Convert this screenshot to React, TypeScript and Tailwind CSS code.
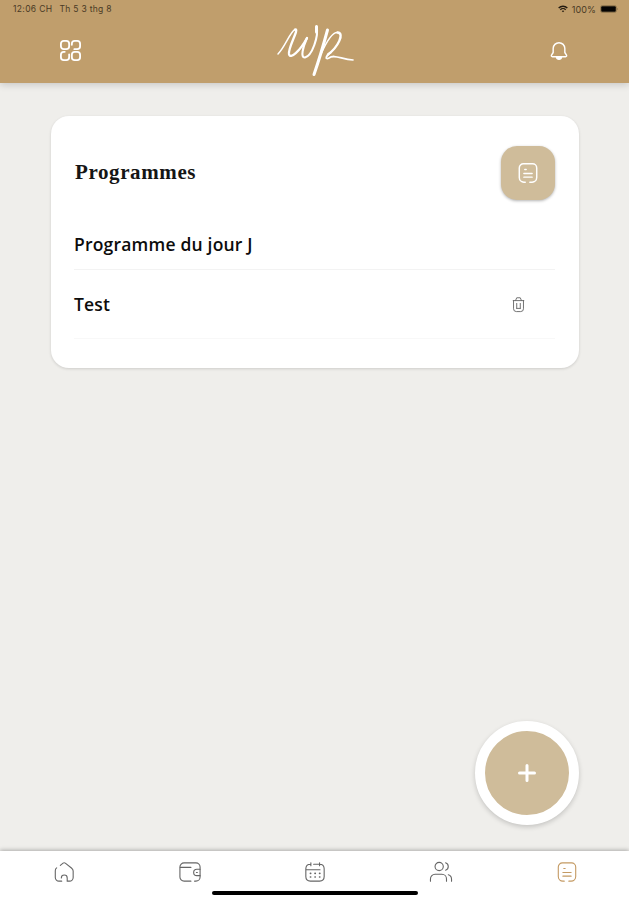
import React from 'react';

type IconProps = {
    className?: string;
    strokeWidth?: number;
};

type SvgIconProps = IconProps & {
    children: React.ReactNode;
};

function SvgIcon({ className, strokeWidth = 1.2, children }: SvgIconProps) {
    return (
        <svg
            viewBox="0 0 24 24"
            fill="none"
            stroke="currentColor"
            strokeWidth={strokeWidth}
            strokeLinecap="round"
            strokeLinejoin="round"
            className={className}
        >
            {children}
        </svg>
    );
}

const GridIcon = (props: IconProps) => (
    <SvgIcon {...props}>
        <rect x="2" y="2" width="8.6" height="8.6" rx="3" />
        <path d="M13.400 6V5a3 3 0 0 1 3-3H19a3 3 0 0 1 3 3v2.600a3 3 0 0 1-3 3h-3" />
        <path d="M6 13.400H5a3 3 0 0 0-3 3V19a3 3 0 0 0 3 3h2.600a3 3 0 0 0 3-3v-3" />
        <rect x="13.4" y="13.4" width="8.6" height="8.6" rx="3" />
    </SvgIcon>
);

const BellIcon = (props: IconProps) => (
    <SvgIcon {...props}>
        <path d="M12 2a7 7 0 0 0-7 7v4.800L3 17c-.5 1 0 1.800 1 1.800h16c1 0 1.500-.8 1-1.800l-2-3.200V9a7 7 0 0 0-7-7Z" />
        <path d="M9 19.500c.5 3.300 5.500 3.300 6 0Z" fill="currentColor" />
    </SvgIcon>
);

const NoteIcon = (props: IconProps) => (
    <SvgIcon {...props}>
        <path d="M9 22H7.500A5 5 0 0 1 2.500 17V6.500A4.500 4.500 0 0 1 7 2h10a4.500 4.500 0 0 1 4.500 4.500V17a5 5 0 0 1-5 5H14" />
        <path d="M8.500 8.200h1.500M7.500 12.500h9M7.500 16.500h9" />
    </SvgIcon>
);

const TrashIcon = (props: IconProps) => (
    <SvgIcon {...props}>
        <path d="M4.500 6.500h15M8 6l1.500-3.500h5L16 6M5 6.500V18a4 4 0 0 0 4 4h6a4 4 0 0 0 4-4V6.500" />
        <path d="M9.500 10.500v7M14.500 10.500v7M9.500 17.500h5" />
    </SvgIcon>
);

const HomeIcon = (props: IconProps) => (
    <SvgIcon {...props}>
        <path d="M8 4.700 11 2.300q1.200-.8 2.400 0l6.700 5.300Q22 9.200 22 11v7a4 4 0 0 1-4 4h-2.500v-3.500a3.200 3.200 0 0 0-6.400 0" />
        <path d="M9.500 22H6.500a4 4 0 0 1-4-4v-7.500q0-2 1.500-3" />
    </SvgIcon>
);

const WalletIcon = (props: IconProps) => (
    <SvgIcon {...props}>
        <path d="M13 22H5.500A4.500 4.500 0 0 1 1 17.500v-11A4.500 4.500 0 0 1 5.500 2h13A4.500 4.500 0 0 1 23 6.500v11a4.500 4.500 0 0 1-4.500 4.500H17" />
        <path d="M1.500 7H13M23 9h-3.500a3.500 3.500 0 0 0 0 7H23M19 12.500h1" />
    </SvgIcon>
);

const CalendarIcon = (props: IconProps) => (
    <SvgIcon {...props}>
        <path d="M7.500 2v3.200M17 2v3.200M10.500 3.500H17q5 0 5 5V17q0 5-5 5H7q-5 0-5-5V8.500q0-5 5-5M2.500 9.500h15" />
        <path d="M7 13.500h.3M12 13.500h.3M17 13.500h.3M7 17.500h.3M12 17.500h.3M17 17.500h.3" strokeWidth="1.800" />
    </SvgIcon>
);

const UsersIcon = (props: IconProps) => (
    <SvgIcon {...props}>
        <circle cx="10" cy="6" r="4.500" />
        <path d="M17 2a4.200 4.200 0 0 1 0 8M.5 22v-2.500a5 5 0 0 1 5-5H13a5 5 0 0 1 5 5V22M20 15q3.500 1 3.500 5v2" />
    </SvgIcon>
);

function Logo() {
    return (
        <svg
            viewBox="0 0 80 56"
            fill="none"
            stroke="currentColor"
            strokeLinecap="round"
            strokeLinejoin="round"
            className="h-14 w-20"
        >
            <path d="M2 31C9 24 14 9 19 6.500" strokeWidth="1.500" />
            <path d="M19 6.500C24 5 12 24 13 31C14 37 24 28 31 15" strokeWidth="2.300" />
            <path d="M31 15C27 24 24 35 29 34.500C36 33 43 13 40.500 3.500" strokeWidth="2.100" />
            <path d="M40.500 3.500V9" strokeWidth="3" />
            <path d="M51.500 7C48 20 43 37 38 51.500" strokeWidth="3" />
            <path d="M45.500 30C50 20 56 9 61.500 9.500" strokeWidth="1.500" />
            <path d="M61.500 9.500C69 10 62 24 52 31.500" strokeWidth="2.400" />
            <path d="M55 29.500C49 33 49 37 53 35C58 31 65 36 77 37" strokeWidth="1.700" />
        </svg>
    );
}

function StatusBar() {
    return (
        <div className="flex h-[18px] items-center justify-between pl-[13px] pr-[10px] text-[8.5px] leading-none text-[#493a25]">
            <div className="flex gap-[7px]">
                <span className="tracking-[0.35px]">12:06 CH</span>
                <span className="tracking-[0.3px]">Th 5 3 thg 8</span>
            </div>
            <div className="flex items-center gap-1">
                <svg viewBox="0 0 12 9" className="h-[8px] w-[10px]" fill="none" stroke="#21190f" strokeWidth="1.700">
                    <path d="M.8 3.200a7.500 7.500 0 0 1 10.400 0M2.800 5.300a4.600 4.600 0 0 1 6.400 0" />
                    <path d="m4.500 6.800 1.500 1.700 1.500-1.700a2.300 2.300 0 0 0-3 0Z" fill="#21190f" stroke="none" />
                </svg>
                <span className="text-[9px] tracking-[0.1px]">100%</span>
                <svg viewBox="0 0 19 8" className="h-2 w-[19px]">
                    <rect x=".5" y=".5" width="16" height="7" rx="2" fill="none" stroke="#6f5a39" strokeWidth=".5" />
                    <rect x="1.200" y="1.200" width="14.600" height="5.600" rx="1" fill="#050403" />
                    <path d="M17.500 2.700q1.200 1.300 0 2.600Z" fill="#6f5a39" />
                </svg>
            </div>
        </div>
    );
}

const NAV_ITEMS = [
    { id: 'home', Icon: HomeIcon, active: false },
    { id: 'wallet', Icon: WalletIcon, active: false },
    { id: 'calendar', Icon: CalendarIcon, active: false },
    { id: 'guests', Icon: UsersIcon, active: false },
    { id: 'programmes', Icon: NoteIcon, active: true }
];

export default function App() {
    return (
        <div className="flex h-[900px] w-[629px] flex-col overflow-hidden bg-[#efeeeb] font-['Open_Sans',sans-serif]">
            <header className="z-10 h-[83px] shrink-0 bg-[#c09e6c] font-['Inter',sans-serif] shadow-[0_2px_7px_rgba(0,0,0,0.16)]">
                <StatusBar />
                <div className="flex h-[65px] items-center justify-between pl-[59px] pr-[60px] text-white">
                    <button type="button" className="w-[23px]">
                        <GridIcon className="size-[23px]" strokeWidth={1.9} />
                    </button>
                    <div>
                        <Logo />
                    </div>
                    <button type="button">
                        <BellIcon className="size-5" strokeWidth={1.7} />
                    </button>
                </div>
            </header>

            <main className="flex flex-1 flex-col justify-between pb-[26px] pl-[51px] pr-[50px] pt-[33px]">
                <section className="h-[252px] rounded-[18px] bg-white pl-[23px] pr-6 pt-[30px] shadow-[0_1px_3px_rgba(0,0,0,0.14)]">
                    <div className="flex h-[54px] items-center justify-between">
                        <h1 className="pb-[2px] pl-[1px] font-['Liberation_Serif',serif] text-[21px] font-bold leading-none tracking-[0.6px] text-[#151515]">
                            Programmes
                        </h1>
                        <button
                            type="button"
                            className="flex size-[54px] items-center justify-center rounded-[16px] bg-[#cfbc9a] text-white shadow-[0_1px_3px_rgba(0,0,0,0.3)]"
                        >
                            <NoteIcon className="size-[22px]" strokeWidth={1.6} />
                        </button>
                    </div>

                    <ul className="mt-5 text-[17.5px] font-semibold tracking-[0.2px] text-[#0c0c0c]">
                        <li className="flex h-[50px] items-center border-b border-[#f3f3f3]">
                            <span>Programme du jour J</span>
                        </li>
                        <li className="flex h-[69px] items-center justify-between border-b border-[#f8f8f8] pr-[28px]">
                            <span>Test</span>
                            <button type="button" className="text-[#666]">
                                <TrashIcon className="size-[17px]" strokeWidth={1.3} />
                            </button>
                        </li>
                    </ul>
                </section>

                <button
                    type="button"
                    className="flex size-[104px] items-center justify-center self-end rounded-full border-[10px] border-white bg-[#cfbc9a] text-white shadow-[0_2px_5px_rgba(0,0,0,0.18)]"
                >
                    <SvgIcon className="size-6" strokeWidth={3}>
                        <path d="M12 4.500v15M4.500 12h15" />
                    </SvgIcon>
                </button>
            </main>

            <footer className="flex h-[49px] shrink-0 flex-col items-center bg-white shadow-[0_-1px_4px_rgba(0,0,0,0.28)]">
                <nav className="flex h-10 w-full translate-x-px pt-[1px]">
                    {NAV_ITEMS.map(({ id, Icon, active }) => (
                        <button
                            key={id}
                            type="button"
                            className={`flex flex-1 items-center justify-center ${active ? 'text-[#c49a63]' : 'text-[#666]'}`}
                        >
                            <Icon
                                className={id === 'wallet' || id === 'guests' ? 'h-[22px] w-6' : 'size-[22px]'}
                                strokeWidth={1.2}
                            />
                        </button>
                    ))}
                </nav>
                <div className="h-1 w-[206px] rounded-full bg-black" />
            </footer>
        </div>
    );
}
